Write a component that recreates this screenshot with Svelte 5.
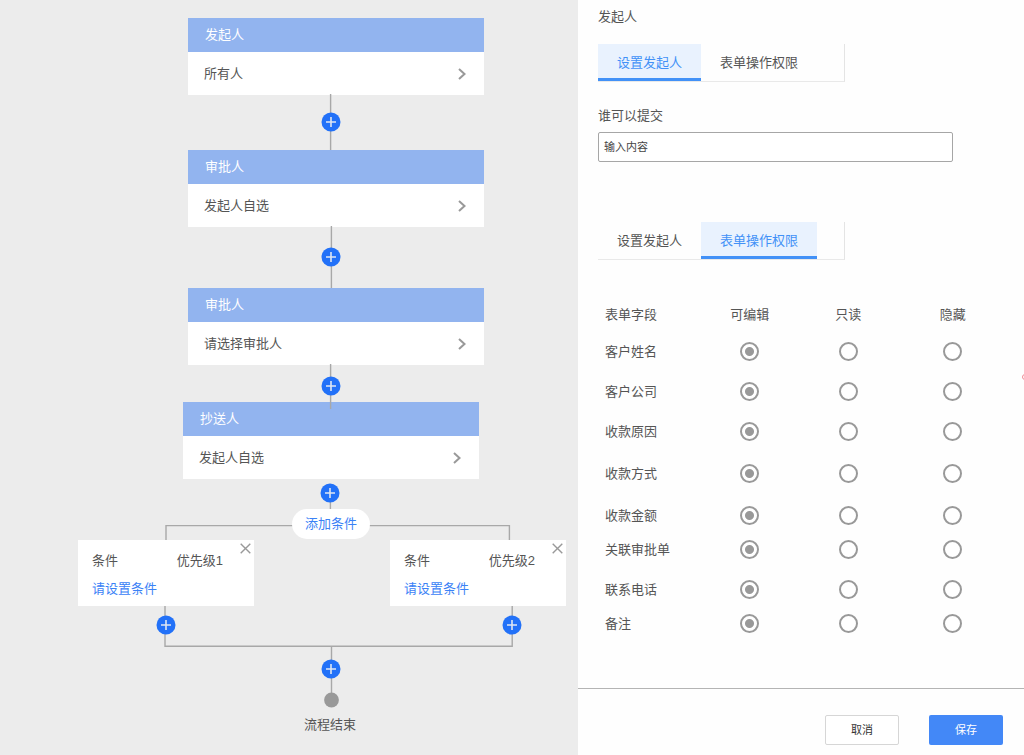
<script>
  const steps = [
    { title: '发起人', value: '所有人', x: 188, y: 18 },
    { title: '审批人', value: '发起人自选', x: 188, y: 150 },
    { title: '审批人', value: '请选择审批人', x: 188, y: 288 },
    { title: '抄送人', value: '发起人自选', x: 183, y: 402 }
  ];

  const conditions = [
    { level: '优先级1', x: 78, y: 540 },
    { level: '优先级2', x: 390, y: 540 }
  ];

  const inserts = [
    { x: 331, y: 122 },
    { x: 331, y: 257 },
    { x: 331, y: 386 },
    { x: 330, y: 493 },
    { x: 166, y: 625 },
    { x: 512, y: 625 },
    { x: 331, y: 669 }
  ];

  const tabs = ['设置发起人', '表单操作权限'];
  const modes = ['可编辑', '只读', '隐藏'];

  let strips = $state({ submit: 0, fields: 1 });

  let fields = $state([
    { name: '客户姓名', size: '', mode: '可编辑' },
    { name: '客户公司', size: '', mode: '可编辑' },
    { name: '收款原因', size: 'tall', mode: '可编辑' },
    { name: '收款方式', size: 'tall', mode: '可编辑' },
    { name: '收款金额', size: 'short', mode: '可编辑' },
    { name: '关联审批单', size: '', mode: '可编辑' },
    { name: '联系电话', size: 'short', mode: '可编辑' },
    { name: '备注', size: '', mode: '可编辑' }
  ]);
</script>

{#snippet tabStrip(key)}
  <div class="tabs" role="tablist">
    {#each tabs as tab, i}
      <button
        type="button"
        role="tab"
        class="tab"
        class:active={strips[key] === i}
        aria-selected={strips[key] === i}
        onclick={() => (strips[key] = i)}>{tab}</button>
    {/each}
  </div>
{/snippet}

<div class="page">
  <main class="canvas">
    <div class="stage">
      {#each steps as step}
        <section class="node step" style="left: {step.x}px; top: {step.y}px">
          <h2>{step.title}</h2>
          <button type="button" class="choice">
            <span>{step.value}</span>
            <svg width="8" height="14" viewBox="0 0 8 14" aria-hidden="true">
              <path d="M1 2l5.5 5L1 12" fill="none" stroke="#999" stroke-width="2" />
            </svg>
          </button>
        </section>
      {/each}

      {#each conditions as condition}
        <section class="node condition" style="left: {condition.x}px; top: {condition.y}px">
          <div class="summary">
            <span>条件</span>
            <span>{condition.level}</span>
          </div>
          <a href="#condition">请设置条件</a>
          <button type="button" class="close" aria-label="×">
            <svg width="11" height="11" viewBox="0 0 11 11" aria-hidden="true">
              <path d="M.7.7l9.6 9.6M10.3.7L.7 10.3" fill="none" stroke="#999" stroke-width="1.4" />
            </svg>
          </button>
        </section>
      {/each}

      <svg class="wires" width="578" height="740" viewBox="0 0 578 740" aria-hidden="true">
        <g fill="none" stroke="#a8a8a8" stroke-width="1.4">
          <path d="M330.6 94V150M331.4 226V288M330.6 364V409M330.4 500V510" />
          <path d="M166 540V525.6H509.4V540" />
          <path d="M165 606V646.2H512.2V606M331.5 646V694" />
        </g>
        <circle cx="331.5" cy="700" r="7.4" fill="#999" />
      </svg>

      {#each inserts as spot}
        <button type="button" class="node insert" aria-label="+" style="left: {spot.x}px; top: {spot.y}px">
          <svg width="20" height="20" viewBox="0 0 20 20" aria-hidden="true">
            <circle cx="10" cy="10" r="9.5" fill="#2271f8" />
            <path d="M5 10h10M10 5v10" stroke="#dfe6f2" stroke-width="1.6" />
          </svg>
        </button>
      {/each}

      <button type="button" class="node add">添加条件</button>
      <span class="node end">流程结束</span>
    </div>
  </main>

  <aside class="panel">
    <div class="content">
      <h1>发起人</h1>
      {@render tabStrip('submit')}
      <label class="caption" for="submitter">谁可以提交</label>
      <input id="submitter" class="field" type="text" placeholder="输入内容" />

      <div class="permissions">
        {@render tabStrip('fields')}
      </div>

      <table>
        <thead>
          <tr>
            <th scope="col" class="name">表单字段</th>
            <th scope="col">可编辑</th>
            <th scope="col" class="read">只读</th>
            <th scope="col" class="hide">隐藏</th>
          </tr>
        </thead>
        <tbody>
          {#each fields as field, i}
            <tr class={field.size}>
              <th scope="row" class="name">{field.name}</th>
              {#each modes as mode}
                <td>
                  <input
                    type="radio"
                    name="field-{i}"
                    value={mode}
                    aria-label="{field.name} {mode}"
                    bind:group={field.mode} />
                </td>
              {/each}
            </tr>
          {/each}
        </tbody>
      </table>
    </div>

    <footer>
      <button type="button" class="cancel">取消</button>
      <button type="button" class="save">保存</button>
    </footer>
    <span class="marker" aria-hidden="true"></span>
  </aside>
</div>

<style>
  :global(body) {
    margin: 0;
  }

  .page,
  .page :is(button, input) {
    font-family: 'Liberation Sans', 'Noto Sans CJK SC', sans-serif;
  }

  .page {
    display: grid;
    grid-template-columns: 578fr 446fr;
    min-height: 100vh;
    font-size: 13px;
    line-height: 20px;
    color: #555;
    background: #fefefe;
  }

  button {
    margin: 0;
    padding: 0;
    border: 0;
    background: none;
    color: inherit;
    font-size: 13px;
    line-height: 20px;
    cursor: pointer;
  }

  h1,
  h2 {
    margin: 0;
    font-size: 13px;
    font-weight: 400;
  }

  svg {
    display: block;
  }

  .canvas {
    background: #ececec;
  }

  .stage {
    position: relative;
    width: 578px;
    height: 740px;
    margin: 0 auto;
  }

  .node {
    position: absolute;
  }

  .step {
    width: 296px;
    background: #fff;
  }

  .step h2 {
    padding: 7px 17px;
    background: #92b4ef;
    color: #fff;
  }

  .choice {
    display: flex;
    justify-content: space-between;
    align-items: center;
    width: 100%;
    height: 43px;
    padding: 0 18px 0 16px;
  }

  .condition {
    box-sizing: border-box;
    width: 176px;
    height: 66px;
    padding: 11px 31px 0 14px;
    background: #fff;
  }

  .summary {
    display: flex;
    justify-content: space-between;
    margin-bottom: 8px;
  }

  .condition a {
    display: block;
    color: #3b82f6;
    text-decoration: none;
  }

  .close {
    position: absolute;
    top: 3px;
    right: 3px;
  }

  .wires {
    position: absolute;
    inset: 0;
    pointer-events: none;
  }

  .insert {
    transform: translate(-50%, -50%);
  }

  .add {
    left: 292px;
    top: 509px;
    padding: 5px 13px;
    border-radius: 16px;
    background: #fff;
    color: #3b82f6;
  }

  .end {
    left: 304px;
    top: 715px;
  }

  .panel {
    position: relative;
    display: flex;
    flex-direction: column;
    overflow: hidden;
  }

  .content {
    flex: 1;
    padding: 7px 17px 24px 20px;
  }

  .tabs {
    display: flex;
    box-sizing: border-box;
    width: 247px;
    height: 38px;
    border-right: 1px solid #e4e4e4;
    border-bottom: 1px solid #e9e9e9;
  }

  h1 + .tabs {
    margin-top: 17px;
  }

  .tab {
    padding: 0 19px;
    border-bottom: 3px solid transparent;
    border-top: 3px solid transparent;
  }

  .tab.active {
    background: #e9f2fe;
    background-clip: border-box;
    border-top-color: #e9f2fe;
    border-bottom-color: #4291f7;
    color: #4291f7;
  }

  .caption {
    display: block;
    margin-top: 24px;
  }

  .field {
    display: block;
    box-sizing: border-box;
    width: calc(100% - 54px);
    height: 30px;
    margin-top: 6px;
    padding: 0 5px;
    border: 1px solid #a6a6a6;
    border-radius: 2px;
    background: #fff;
    color: #444;
    font-size: 11px;
  }

  .field::placeholder {
    color: #444;
    opacity: 1;
  }

  .permissions {
    margin-top: 60px;
  }

  table {
    width: calc(100% - 7px);
    margin: 45px 0 0 7px;
    border-collapse: collapse;
    table-layout: fixed;
  }

  th,
  td {
    width: 24%;
    height: 40px;
    padding: 0;
    font-weight: 400;
    text-align: center;
    vertical-align: top;
  }

  thead th {
    height: 37px;
  }

  .name {
    text-align: left;
  }

  .read {
    width: 25%;
  }

  .hide {
    width: 27%;
  }

  .tall :is(th, td) {
    height: 42px;
  }

  .short :is(th, td) {
    height: 34px;
  }

  tbody tr:last-child :is(th, td) {
    height: 20px;
  }

  input[type='radio'] {
    appearance: none;
    display: block;
    box-sizing: border-box;
    width: 19px;
    height: 19px;
    margin: 0 auto;
    border: 2px solid #999;
    border-radius: 50%;
    background: #fff;
  }

  input[type='radio']:checked {
    background: radial-gradient(circle, #999 4px, #fff 5px);
  }

  footer {
    display: flex;
    justify-content: flex-end;
    gap: 30px;
    padding: 26px 21px 10px;
    border-top: 1px solid #b4b4b4;
  }

  footer button {
    box-sizing: border-box;
    width: 74px;
    height: 30px;
    border-radius: 2px;
    font-size: 11px;
  }

  .cancel {
    border: 1px solid #d6d6d6;
    background: #fff;
    color: #333;
  }

  .save {
    background: #4388f7;
    color: #fff;
  }

  .marker {
    position: absolute;
    top: 374px;
    right: -4px;
    width: 4px;
    height: 4px;
    border: 1px solid #f08a94;
    border-radius: 50%;
  }
</style>
